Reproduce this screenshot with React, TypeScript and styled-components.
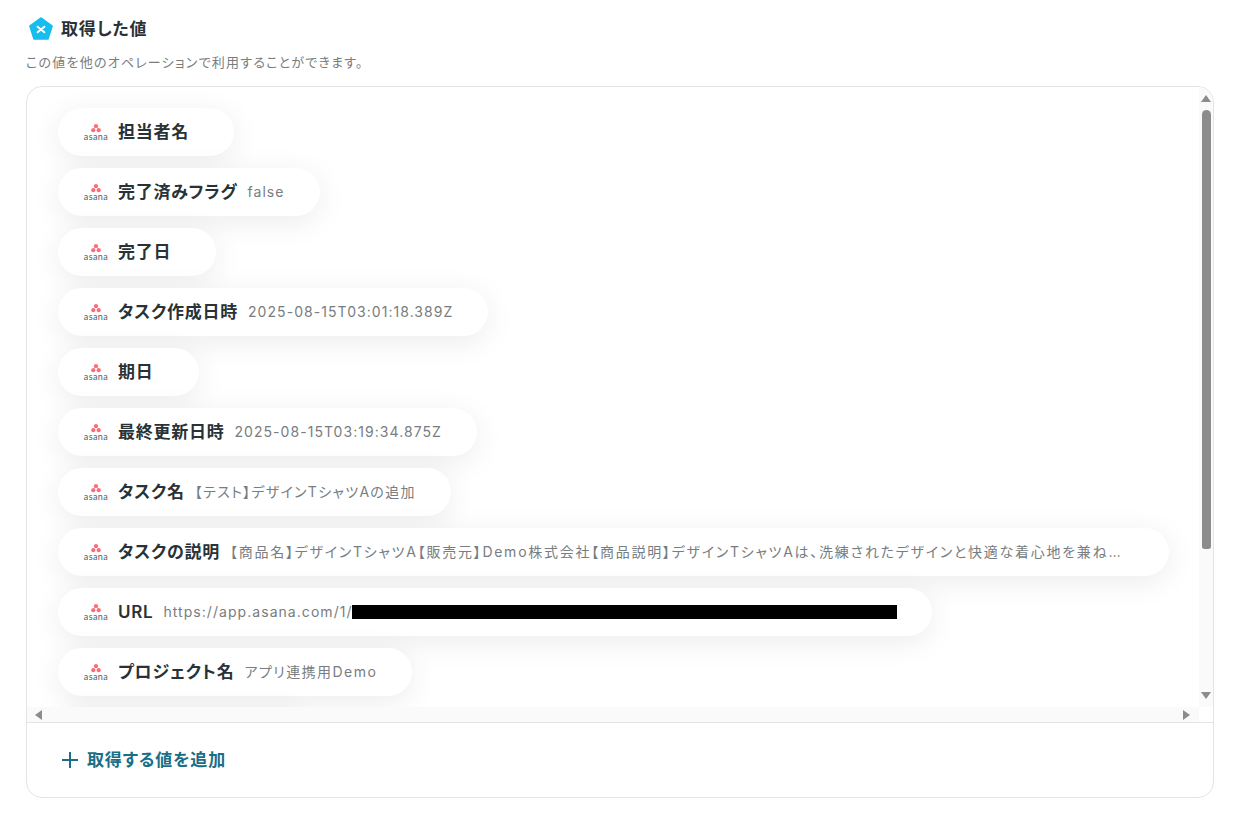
import React from "react"
import styled, { createGlobalStyle } from "styled-components"

const GlobalStyle = createGlobalStyle`
    html, body {
        margin: 0;
        padding: 0;
        background: #fff;
        font-family: Inter, "Noto Sans CJK JP", sans-serif;
        font-feature-settings: "palt";
    }
`

const Page = styled.div`
    width: 1236px;
    height: 813px;
    box-sizing: border-box;
    padding: 15px 22px 15px 26px;
    display: flex;
    flex-direction: column;
    overflow: hidden;
`

const Header = styled.div`
    display: flex;
    align-items: center;
    gap: 8px;
    height: 28px;
    padding-left: 3px;
`

const Title = styled.h2`
    margin: 0;
    font-size: 17px;
    line-height: 26px;
    font-weight: 600;
    letter-spacing: 0.05em;
    color: #283237;
`

const Description = styled.p`
    margin: 10px 0 15px;
    font-size: 13px;
    line-height: 18px;
    letter-spacing: 1.22px;
    color: #777d80;
`

const Card = styled.div`
    height: 712px;
    box-sizing: border-box;
    border: 1px solid #e4e4e4;
    border-radius: 16px;
    display: flex;
    flex-direction: column;
    overflow: hidden;
`

const ScrollArea = styled.div`
    flex: 1;
    min-height: 0;
    display: grid;
    grid-template-columns: 1fr 14px;
    grid-template-rows: 1fr 15px;
    border-bottom: 1px solid #e4e4e4;
`

const List = styled.ul`
    margin: 0;
    padding: 21px 0 0 31px;
    list-style: none;
    display: flex;
    flex-direction: column;
    align-items: flex-start;
    gap: 12px;
    overflow: hidden;
    min-height: 0;
`

const Pill = styled.li`
    flex: none;
    height: 48px;
    box-sizing: border-box;
    padding: 0 35px 0 26px;
    display: flex;
    align-items: center;
    gap: 10px;
    background: #fff;
    border-radius: 24px;
    box-shadow: 0 6px 30px rgba(0, 0, 0, 0.08);
`

const AsanaMark = styled.span`
    width: 24px;
    margin-bottom: 2px;
    display: flex;
    flex-direction: column;
    align-items: center;
    flex: none;
`

const AsanaWord = styled.span`
    margin-top: 1px;
    font-family: Lato, sans-serif;
    font-feature-settings: normal;
    font-size: 9px;
    line-height: 6px;
    letter-spacing: 0.4px;
    color: #555a64;
`

const Label = styled.span`
    font-size: 17px;
    line-height: 24px;
    font-weight: 600;
    letter-spacing: 0.75px;
    color: #283237;
    white-space: nowrap;
    flex: none;
`

const Value = styled.span<{ $spacing?: number }>`
    display: block;
    max-width: 904px;
    font-size: 14px;
    line-height: 24px;
    letter-spacing: ${({ $spacing }) => $spacing ?? 1.05}px;
    color: #777d80;
    white-space: nowrap;
    overflow: hidden;
    text-overflow: ellipsis;
`

const Redacted = styled.span`
    display: inline-block;
    width: 545px;
    height: 14px;
    margin-left: -1px;
    background: #000;
    vertical-align: -2px;
`

const VerticalRail = styled.div`
    grid-row: 1 / 3;
    grid-column: 2;
    background: #fafafa;
    display: flex;
    flex-direction: column;
    align-items: center;
    padding: 8px 0;
    box-sizing: border-box;
    height: 620px;
`

const HorizontalRail = styled.div`
    grid-row: 2;
    grid-column: 1;
    background: #fafafa;
    display: flex;
    align-items: center;
    justify-content: space-between;
    padding: 0 9px 0 8px;
`

const Thumb = styled.div`
    width: 9px;
    height: 439px;
    margin-top: 8px;
    border-radius: 5px 5px 3px 3px;
    background: #8c8c8c;
`

const Spacer = styled.div`
    flex: 1;
`

const Arrow = styled.span<{ $dir: "up" | "down" | "left" | "right" }>`
    width: 0;
    height: 0;
    flex: none;
    border-style: solid;
    border-color: transparent;
    ${({ $dir }) =>
        $dir === "up"
            ? "border-width: 0 5px 7px; border-bottom-color: #8c8c8c;"
            : $dir === "down"
            ? "border-width: 7px 5px 0; border-top-color: #8c8c8c;"
            : $dir === "left"
            ? "border-width: 5px 7px 5px 0; border-right-color: #8c8c8c;"
            : "border-width: 5px 0 5px 7px; border-left-color: #8c8c8c;"}
`

const Footer = styled.div`
    height: 74px;
    flex: none;
    box-sizing: border-box;
    display: flex;
    align-items: center;
    padding: 0 0 0 34px;
`

const AddButton = styled.button`
    border: none;
    background: none;
    padding: 0;
    display: flex;
    align-items: center;
    gap: 8px;
    font-family: inherit;
    font-feature-settings: "palt";
    font-size: 17px;
    line-height: 24px;
    font-weight: 600;
    letter-spacing: 0.05em;
    color: #1a6e85;
`

const Logo = () => (
    <svg width="24" height="24" viewBox="0 0 24 24">
        <path
            d="M12 1.6 L22.6 9.2 L18.6 21.6 L5.4 21.6 L1.4 9.2 Z"
            fill="#17bdee"
            stroke="#17bdee"
            strokeWidth="2.5"
            strokeLinejoin="round"
        />
        <path
            d="M8.6 9.8 L15.4 15.2 M15.4 9.8 L8.6 15.2"
            stroke="#fff"
            strokeWidth="2"
            strokeLinecap="round"
        />
    </svg>
)

const Asana = () => (
    <AsanaMark>
        <svg width="12" height="10" viewBox="0 0 12 10">
            <circle cx="6" cy="3.2" r="2.1" fill="#fa6d7b" />
            <circle cx="3.3" cy="7.2" r="2.1" fill="#fa6d7b" />
            <circle cx="8.7" cy="7.2" r="2.1" fill="#fa6d7b" />
        </svg>
        <AsanaWord>asana</AsanaWord>
    </AsanaMark>
)

const items: { label: string; value?: React.ReactNode; spacing?: number }[] = [
    { label: "担当者名" },
    { label: "完了済みフラグ", value: "false" },
    { label: "完了日" },
    { label: "タスク作成日時", value: "2025-08-15T03:01:18.389Z" },
    { label: "期日" },
    { label: "最終更新日時", value: "2025-08-15T03:19:34.875Z" },
    { label: "タスク名", value: "【テスト】デザインTシャツAの追加", spacing: 1.3 },
    {
        label: "タスクの説明",
        value: "【商品名】デザインTシャツA【販売元】Demo株式会社【商品説明】デザインTシャツAは、洗練されたデザインと快適な着心地を兼ね備えた一枚です。",
        spacing: 1.74,
    },
    {
        label: "URL",
        value: (
            <>
                https://app.asana.com/1/
                <Redacted />
            </>
        ),
    },
    { label: "プロジェクト名", value: "アプリ連携用Demo", spacing: 1.45 },
    { label: "セクション名", value: "未着手", spacing: 1.45 },
]

const App = () => {
    return (
        <Page>
            <GlobalStyle />
            <Header>
                <Logo />
                <Title>取得した値</Title>
            </Header>
            <Description>この値を他のオペレーションで利用することができます。</Description>
            <Card>
                <ScrollArea>
                    <List>
                        {items.map(item => (
                            <Pill key={item.label}>
                                <Asana />
                                <Label>{item.label}</Label>
                                <Value $spacing={item.spacing}>{item.value}</Value>
                            </Pill>
                        ))}
                    </List>
                    <VerticalRail>
                        <Arrow $dir="up" />
                        <Thumb />
                        <Spacer />
                        <Arrow $dir="down" />
                    </VerticalRail>
                    <HorizontalRail>
                        <Arrow $dir="left" />
                        <Arrow $dir="right" />
                    </HorizontalRail>
                </ScrollArea>
                <Footer>
                    <AddButton>
                        <svg width="18" height="18" viewBox="0 0 18 18" shapeRendering="crispEdges">
                            <path
                                d="M9 1 V17 M1 9 H17"
                                stroke="#1a6e85"
                                strokeWidth="2"
                                fill="none"
                            />
                        </svg>
                        取得する値を追加
                    </AddButton>
                </Footer>
            </Card>
        </Page>
    )
}

export default App
